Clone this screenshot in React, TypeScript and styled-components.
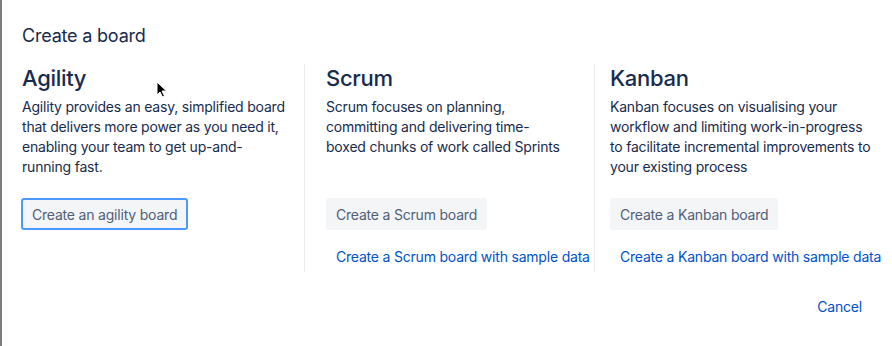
import React from "react";
import styled, { createGlobalStyle } from "styled-components";

const Global = createGlobalStyle`
  html, body { margin: 0; padding: 0; background: #fff; }
  body { font-family: Inter, "Noto Sans", "Liberation Sans", sans-serif; color: #172B4D; }
  * { box-sizing: border-box; }
`;

const Dialog = styled.div`
  position: relative;
  width: 892px;
  height: 346px;
  border-left: 2px solid #7d7d7d;
  padding: 24px 20px 0 20px;
  display: flex;
  flex-direction: column;
  overflow: hidden;
`;

const Title = styled.h1`
  margin: 0 0 16px 0;
  font-size: 18px;
  line-height: 24px;
  font-weight: 400;
  letter-spacing: -0.2px;
  color: #172B4D;
`;

const Columns = styled.div`
  display: grid;
  grid-template-columns: 282px 290px 1fr;
`;

const Column = styled.section<{ $pl: number; $divider?: boolean }>`
  display: flex;
  flex-direction: column;
  align-items: flex-start;
  padding-left: ${(p) => p.$pl}px;
  border-left: ${(p) => (p.$divider ? "1px solid #EBECF0" : "none")};
  min-width: 0;
`;

const Heading = styled.h2`
  margin: 0 0 5px 0;
  font-size: 22px;
  line-height: 28px;
  font-weight: 500;
  color: #172B4D;
  letter-spacing: -0.3px;
`;

const Description = styled.p<{ $w: number }>`
  margin: 0 0 21px 0;
  min-height: 80px;
  font-size: 14px;
  line-height: 20px;
  letter-spacing: -0.2px;
  color: #172B4D;
  max-width: ${(p) => p.$w}px;
`;

const Button = styled.button<{ $focused?: boolean }>`
  height: 32px;
  margin-left: ${(p) => (p.$focused ? -1 : 0)}px;
  padding: 0 ${(p) => (p.$focused ? 9 : 10)}px;
  border-radius: 3px;
  border: ${(p) => (p.$focused ? "2px solid #4C9AFF" : "none")};
  background: #F4F5F7;
  color: #505F79;
  font-family: inherit;
  font-size: 14px;
  letter-spacing: -0.2px;
  cursor: pointer;
  white-space: nowrap;
`;

const LinkButton = styled.button`
  margin-top: 10px;
  height: 32px;
  padding: 0 10px;
  border: none;
  background: transparent;
  color: #0052CC;
  font-family: inherit;
  font-size: 14px;
  letter-spacing: -0.2px;
  white-space: nowrap;
  cursor: pointer;
`;

const Footer = styled.div`
  display: flex;
  justify-content: flex-end;
  margin-top: 18px;
`;

const CancelButton = styled(LinkButton)`
  margin-top: 0;
`;

const Cursor = styled.svg`
  position: absolute;
  left: 154px;
  top: 81px;
`;

export default function App() {
  return (
    <>
      <Global />
      <Dialog>
        <Title>Create a board</Title>
        <Columns>
          <Column $pl={0}>
            <Heading>Agility</Heading>
            <Description $w={268}>
              Agility provides an easy, simplified board that delivers more power as you need it,
              enabling your team to get up-and-running fast.
            </Description>
            <Button $focused>Create an agility board</Button>
          </Column>
          <Column $pl={21} $divider>
            <Heading>Scrum</Heading>
            <Description $w={240}>
              Scrum focuses on planning, committing and delivering time-boxed chunks of work called
              Sprints
            </Description>
            <Button>Create a Scrum board</Button>
            <LinkButton>Create a Scrum board with sample data</LinkButton>
          </Column>
          <Column $pl={15} $divider>
            <Heading>Kanban</Heading>
            <Description $w={266}>
              Kanban focuses on visualising your workflow and limiting work-in-progress to facilitate
              incremental improvements to your existing process
            </Description>
            <Button>Create a Kanban board</Button>
            <LinkButton>Create a Kanban board with sample data</LinkButton>
          </Column>
        </Columns>
        <Footer>
          <CancelButton>Cancel</CancelButton>
        </Footer>
        <Cursor width="12" height="17" viewBox="0 0 12 17">
          <path d="M1 1 L1 14 L4 11 L6.5 16 L8.5 15 L6 10 L10.5 10 Z" fill="#000" stroke="#fff" strokeWidth="1" />
        </Cursor>
      </Dialog>
    </>
  );
}
